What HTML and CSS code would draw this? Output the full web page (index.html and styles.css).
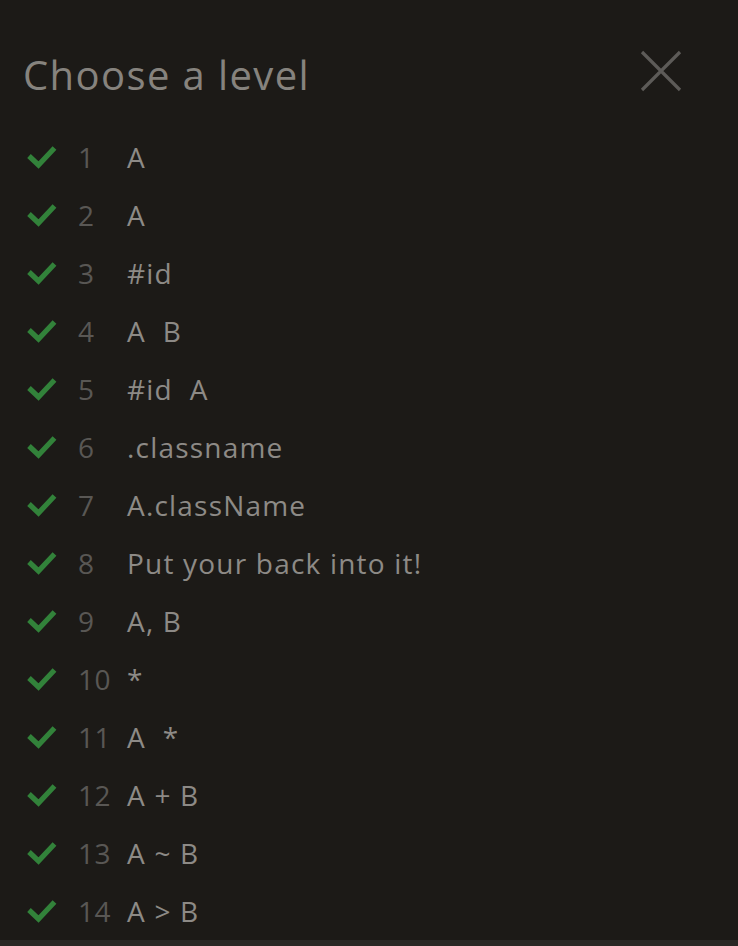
FILE: index.html
```html
<!DOCTYPE html>
<html>
<head>
<meta charset="utf-8">
<link rel="stylesheet" href="styles.css">
</head>
<body>
<div class="panel">
  <header class="head">
    <h1 class="title">Choose a level</h1>
    <button class="close" aria-label="Close">
      <svg width="44" height="44" viewBox="0 0 44 44"><path d="M3 3 L41 41 M41 3 L3 41" stroke="#5d5b58" stroke-width="3.2" fill="none"/></svg>
    </button>
  </header>
  <ul class="levels">
    <li class="level"><svg class="check" viewBox="0 0 30 26"><path d="M2 12 L11.5 21 L27.5 4" stroke="#32823a" stroke-width="5.2" fill="none"/></svg><span class="num">1</span><span class="name">A</span></li>
    <li class="level"><svg class="check" viewBox="0 0 30 26"><path d="M2 12 L11.5 21 L27.5 4" stroke="#32823a" stroke-width="5.2" fill="none"/></svg><span class="num">2</span><span class="name">A</span></li>
    <li class="level"><svg class="check" viewBox="0 0 30 26"><path d="M2 12 L11.5 21 L27.5 4" stroke="#32823a" stroke-width="5.2" fill="none"/></svg><span class="num">3</span><span class="name">#id</span></li>
    <li class="level"><svg class="check" viewBox="0 0 30 26"><path d="M2 12 L11.5 21 L27.5 4" stroke="#32823a" stroke-width="5.2" fill="none"/></svg><span class="num">4</span><span class="name">A&nbsp;&nbsp;B</span></li>
    <li class="level"><svg class="check" viewBox="0 0 30 26"><path d="M2 12 L11.5 21 L27.5 4" stroke="#32823a" stroke-width="5.2" fill="none"/></svg><span class="num">5</span><span class="name">#id&nbsp;&nbsp;A</span></li>
    <li class="level"><svg class="check" viewBox="0 0 30 26"><path d="M2 12 L11.5 21 L27.5 4" stroke="#32823a" stroke-width="5.2" fill="none"/></svg><span class="num">6</span><span class="name">.classname</span></li>
    <li class="level"><svg class="check" viewBox="0 0 30 26"><path d="M2 12 L11.5 21 L27.5 4" stroke="#32823a" stroke-width="5.2" fill="none"/></svg><span class="num">7</span><span class="name">A.className</span></li>
    <li class="level"><svg class="check" viewBox="0 0 30 26"><path d="M2 12 L11.5 21 L27.5 4" stroke="#32823a" stroke-width="5.2" fill="none"/></svg><span class="num">8</span><span class="name">Put your back into it!</span></li>
    <li class="level"><svg class="check" viewBox="0 0 30 26"><path d="M2 12 L11.5 21 L27.5 4" stroke="#32823a" stroke-width="5.2" fill="none"/></svg><span class="num">9</span><span class="name">A, B</span></li>
    <li class="level"><svg class="check" viewBox="0 0 30 26"><path d="M2 12 L11.5 21 L27.5 4" stroke="#32823a" stroke-width="5.2" fill="none"/></svg><span class="num">10</span><span class="name">*</span></li>
    <li class="level"><svg class="check" viewBox="0 0 30 26"><path d="M2 12 L11.5 21 L27.5 4" stroke="#32823a" stroke-width="5.2" fill="none"/></svg><span class="num">11</span><span class="name">A&nbsp;&nbsp;*</span></li>
    <li class="level"><svg class="check" viewBox="0 0 30 26"><path d="M2 12 L11.5 21 L27.5 4" stroke="#32823a" stroke-width="5.2" fill="none"/></svg><span class="num">12</span><span class="name">A + B</span></li>
    <li class="level"><svg class="check" viewBox="0 0 30 26"><path d="M2 12 L11.5 21 L27.5 4" stroke="#32823a" stroke-width="5.2" fill="none"/></svg><span class="num">13</span><span class="name">A ~ B</span></li>
    <li class="level"><svg class="check" viewBox="0 0 30 26"><path d="M2 12 L11.5 21 L27.5 4" stroke="#32823a" stroke-width="5.2" fill="none"/></svg><span class="num">14</span><span class="name">A &gt; B</span></li>
  </ul>
</div>
<div class="strip"></div>
</body>
</html>
```
FILE: styles.css
```css
html, body {
  margin: 0;
  padding: 0;
  background: #1c1a17;
}
body {
  font-family: "Open Sans", "Noto Sans", sans-serif;
  height: 946px;
  overflow: hidden;
  display: flex;
  flex-direction: column;
}
.panel {
  flex: 1;
  padding: 43px 0 0 23px;
}
.head {
  display: flex;
  align-items: center;
  justify-content: space-between;
  padding-right: 55px;
  height: 62px;
}
.title {
  margin: 0;
  font-weight: 400;
  font-size: 40px;
  color: #86837e;
  letter-spacing: 1.4px;
}
.close {
  background: none;
  border: 0;
  padding: 0;
  width: 44px;
  height: 44px;
  margin-top: -6px;
}
.close svg { display: block; }
.levels {
  list-style: none;
  margin: 0;
  padding: 23px 0 0 4px;
}
.level {
  display: flex;
  align-items: center;
  height: 58px;
  font-size: 28px;
}
.check {
  width: 30px;
  height: 26px;
  flex: none;
}
.num {
  width: 49px;
  padding-left: 21px;
  color: #595754;
  letter-spacing: 0.5px;
}
.name {
  color: #8d8a86;
  letter-spacing: 1.2px;
}
.strip {
  height: 8px;
  background: #2a2825;
}
```
